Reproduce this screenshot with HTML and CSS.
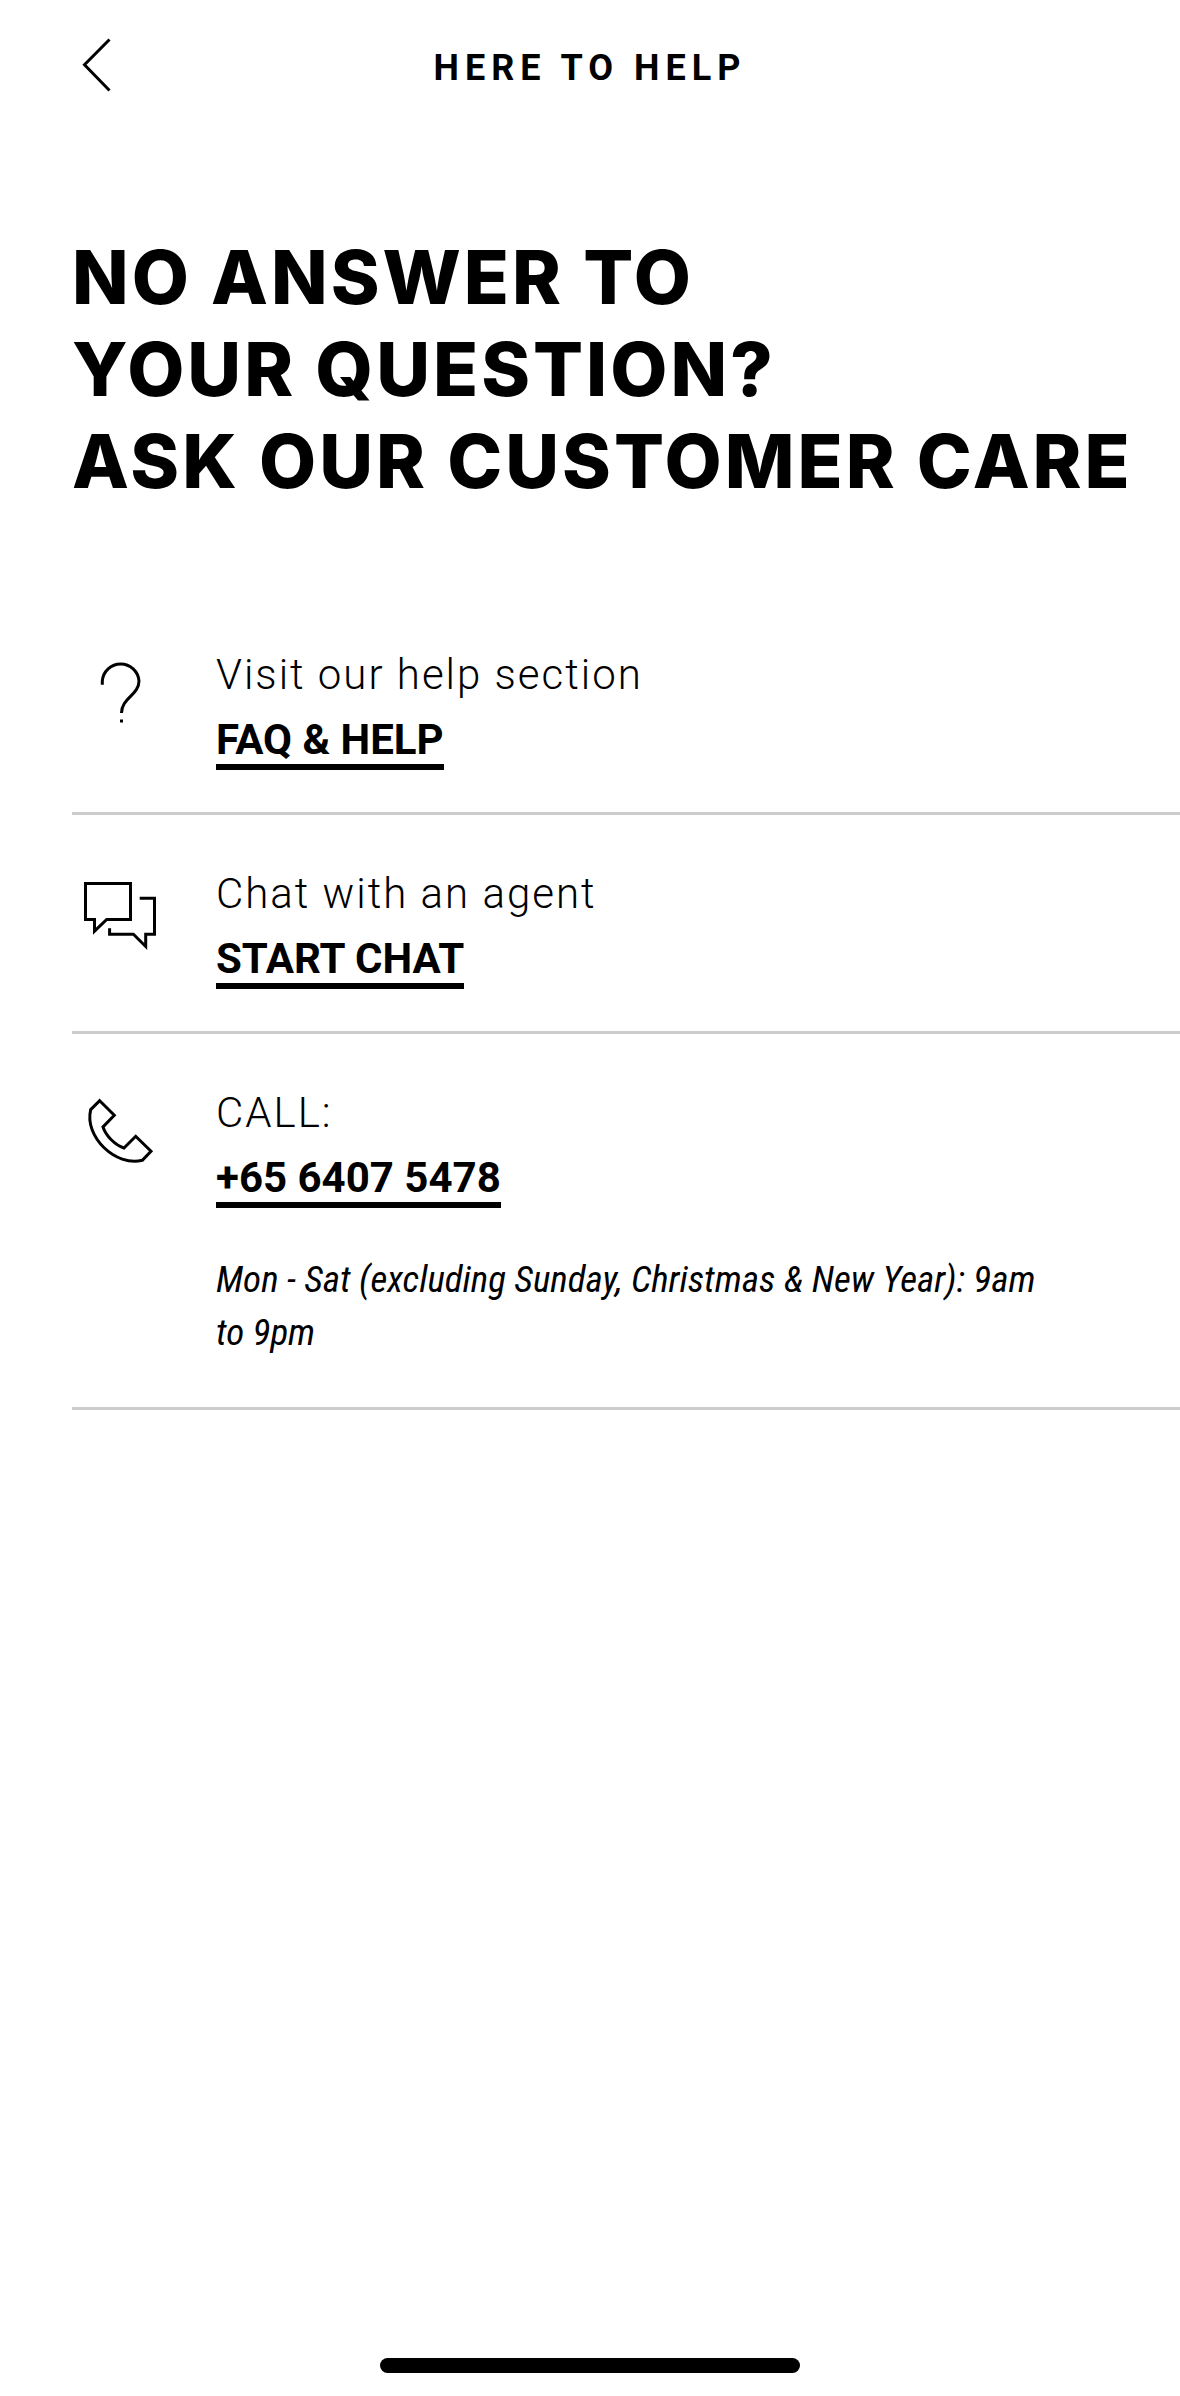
FILE: index.html
```html
<!DOCTYPE html>
<html lang="en">
<head>
  <meta charset="utf-8">
  <meta name="viewport" content="width=device-width, initial-scale=1">
  <title>Here to help</title>
  <link rel="stylesheet" href="styles.css">
</head>
<body>
  <header class="top-bar">
    <button type="button" class="back-button" aria-label="Back">
      <svg width="48" height="72" viewBox="0 0 48 72">
        <path d="M37.5 7.5 L12.5 32.7 L37.5 58.5"/>
      </svg>
    </button>
    <h1 class="top-title">HERE TO HELP</h1>
  </header>

  <main class="content">
    <h2 class="heading">NO ANSWER TO<br>YOUR QUESTION?<br>ASK OUR CUSTOMER CARE</h2>

    <ul class="contact-list">
      <!-- Help section -->
      <li class="contact-item">
        <svg class="icon" width="96" height="96" viewBox="0 0 96 96">
          <path d="M30.3 34.7 V31 A18.4 18.4 0 0 1 67 31 C67 45 49.5 48 49.5 63"/>
          <rect class="dot" x="48" y="69.5" width="3" height="3"/>
        </svg>
        <div class="contact-text">
          <p>Visit our help section</p>
          <a href="#faq">FAQ &amp; HELP</a>
        </div>
      </li>

      <!-- Chat -->
      <li class="contact-item">
        <svg class="icon" width="96" height="96" viewBox="0 0 96 96">
          <path d="M13.5 14.5 H58.5 V50.5 H34.7 L22.5 62.2 V50.5 H13.5 Z"/>
          <path d="M67.7 29.3 H82.5 V65.3 H73.7 V77.5 L61.4 65.3 H37.6 V59.3"/>
        </svg>
        <div class="contact-text">
          <p>Chat with an agent</p>
          <a href="#chat">START CHAT</a>
        </div>
      </li>

      <!-- Phone -->
      <li class="contact-item">
        <svg class="icon" width="96" height="96" viewBox="0 0 96 96">
          <path d="M27.7 12.7 L42.3 27.3 L31 39 C34 48 43 57 52 60 L63.7 48.3 L79 63.3 L70.3 72.3 C44 79 12 49 18.7 21.6 Z"/>
        </svg>
        <div class="contact-text">
          <p>CALL:</p>
          <a href="tel:+6564075478">+65 6407 5478</a>
          <p class="hours">Mon - Sat (excluding Sunday, Christmas &amp; New Year): 9am to 9pm</p>
        </div>
      </li>
    </ul>
  </main>

  <div class="home-bar"></div>
</body>
</html>
```

FILE: styles.css
```css
* {
  box-sizing: border-box;
}

body {
  margin: 0;
  min-height: 100vh;
  display: flex;
  flex-direction: column;
  background: #fff;
  color: #000;
  font-family: Roboto, "Liberation Sans", sans-serif;
}

h1, h2, p, ul {
  margin: 0;
  padding: 0;
}

svg {
  display: block;
  fill: none;
  stroke: #000;
  stroke-width: 3;
}

/* Top bar */
.top-bar {
  display: grid;
  grid-template-columns: 1fr auto 1fr;
  align-items: center;
  height: 136px;
  padding: 0 72px;
}

.back-button {
  justify-self: start;
  padding: 0;
  border: none;
  background: none;
  cursor: pointer;
}

.top-title {
  font-size: 36px;
  font-weight: 700;
  line-height: 48px;
  letter-spacing: 6px;
}

/* Content */
.content {
  padding: 95px 0 0 72px;
}

.heading {
  margin-bottom: 89px;
  font-family: Inter, "Liberation Sans", sans-serif;
  font-size: 74px;
  font-weight: 800;
  line-height: 92px;
  letter-spacing: 3px;
}

.contact-list {
  list-style: none;
}

.contact-item {
  display: flex;
  gap: 48px;
  padding: 54px 72px 42px 0;
  border-bottom: 3px solid #ccc;
}

.icon {
  flex: none;
}

.dot {
  fill: #000;
  stroke: none;
}

.contact-text {
  display: flex;
  flex-direction: column;
  align-items: flex-start;
  gap: 16px;
  font-size: 42px;
  line-height: 50px;
}

.contact-text p {
  font-weight: 300;
  letter-spacing: 2px;
}

.contact-text a {
  border-bottom: 6px solid #000;
  color: #000;
  font-weight: 700;
  line-height: 48px;
  text-decoration: none;
}

.contact-text .hours {
  max-width: 830px;
  margin: 29px 0 6px;
  font-family: "Roboto Condensed", Roboto, sans-serif;
  font-size: 37px;
  font-style: italic;
  font-weight: 400;
  line-height: 53px;
  letter-spacing: 0;
}

/* Home indicator */
.home-bar {
  width: 420px;
  height: 15px;
  margin: auto auto 23px;
  border-radius: 8px;
  background: #000;
}
```
